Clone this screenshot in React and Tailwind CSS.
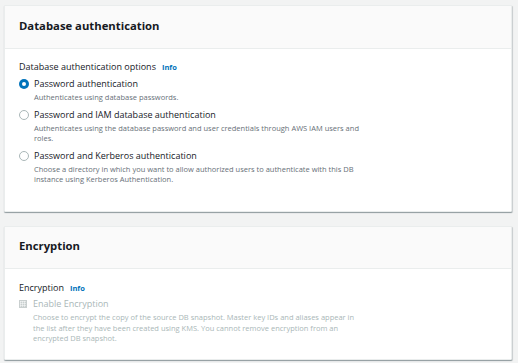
export default function App() {
  const font = { fontFamily: '"Open Sans", "Noto Sans", Arial, sans-serif' };
  return (
    <div className="w-[518px] h-[363px] bg-[#f2f3f3] pt-[5px] pl-[4px] pr-[6px]" style={font}>
      <section className="bg-white border border-[#eaeded] shadow-[0_1px_1px_0_rgba(0,28,36,0.3),1px_1px_1px_0_rgba(0,28,36,0.15)] rounded-[1px]">
        <div className="h-[43px] bg-[#fafafa] border-b border-[#eaeded] px-[14px] pb-[2px] flex items-center">
          <h2 className="text-[11.3px] font-bold text-[#16191f]">Database authentication</h2>
        </div>
        <div className="px-[14px] pt-[11px] pb-[27px]">
          <div className="flex items-baseline gap-[6px] text-[9px] leading-[14px] text-[#16191f]">
            Database authentication options
            <span className="text-[7.5px] font-bold text-[#0073bb]">Info</span>
          </div>
          <div className="mt-[3px] flex flex-col gap-[6px]">
            <Option checked label="Password authentication" desc="Authenticates using database passwords." />
            <Option label="Password and IAM database authentication" desc="Authenticates using the database password and user credentials through AWS IAM users and roles." />
            <Option label="Password and Kerberos authentication" desc="Choose a directory in which you want to allow authorized users to authenticate with this DB instance using Kerberos Authentication." />
          </div>
        </div>
      </section>

      <section className="mt-[14px] bg-white border border-[#eaeded] shadow-[0_1px_1px_0_rgba(0,28,36,0.3),1px_1px_1px_0_rgba(0,28,36,0.15)] rounded-[1px]">
        <div className="h-[42px] bg-[#fafafa] border-b border-[#eaeded] px-[14px] pb-[2px] flex items-center">
          <h2 className="text-[11.3px] font-bold text-[#16191f]">Encryption</h2>
        </div>
        <div className="px-[14px] pt-[12px] pb-[15px]">
          <div className="flex items-baseline gap-[6px] text-[9px] leading-[14px] text-[#16191f]">
            Encryption
            <span className="text-[7.5px] font-bold text-[#0073bb]">Info</span>
          </div>
          <div className="mt-[2px] flex gap-[6px]">
            <div className="mt-[3px] w-[8px] h-[8px] shrink-0 bg-[#c9cfcf] border border-[#c9cfcf] bg-[linear-gradient(90deg,rgba(255,255,255,0.45)_1px,transparent_1px),linear-gradient(rgba(255,255,255,0.45)_1px,transparent_1px)] bg-[length:2px_2px]" />
            <div>
              <div className="text-[9px] text-[#aab7b8] leading-[14px]">Enable Encryption</div>
              <p className="mt-[1px] text-[7.5px] leading-[10.5px] text-[#aab7b8] w-[334px]">
                Choose to encrypt the copy of the source DB snapshot. Master key IDs and aliases appear in the list after they have been created using KMS. You cannot remove encryption from an encrypted DB snapshot.
              </p>
            </div>
          </div>
        </div>
      </section>
    </div>
  );
}

function Option({ checked, label, desc }) {
  return (
    <label className="flex gap-[5px]">
      {checked ? (
        <span className="mt-[2px] w-[10px] h-[10px] shrink-0 rounded-full bg-[#0073bb] flex items-center justify-center">
          <span className="w-[4px] h-[4px] rounded-full bg-white" />
        </span>
      ) : (
        <span className="mt-[2px] w-[10px] h-[10px] shrink-0 rounded-full border border-[#aab7b8] bg-white" />
      )}
      <span className="flex flex-col">
        <span className="text-[9px] leading-[14px] text-[#16191f]">{label}</span>
        <span className="mt-[1px] text-[7.5px] leading-[10px] text-[#687078] w-[340px]">{desc}</span>
      </span>
    </label>
  );
}
